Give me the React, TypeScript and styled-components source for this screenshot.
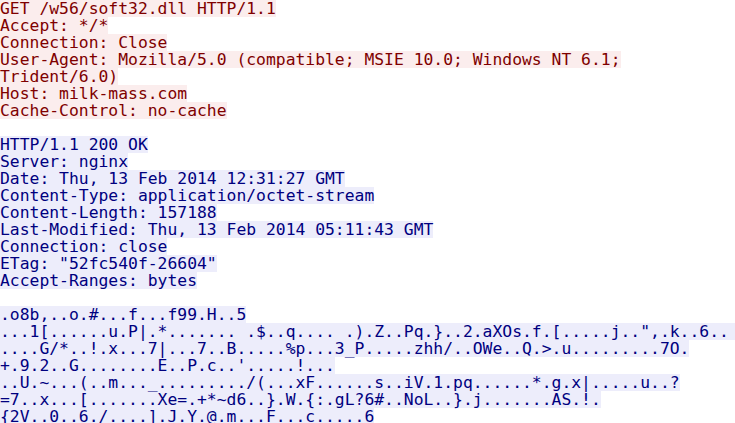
import React from "react";
import styled, { createGlobalStyle } from "styled-components";

const Global = createGlobalStyle`
  html, body {
    margin: 0;
    padding: 0;
    background: #ffffff;
    overflow: hidden;
  }
`;

const Stream = styled.div`
  width: 735px;
  height: 423px;
  overflow: hidden;
  font-family: "DejaVu Sans Mono", "Liberation Mono", monospace;
  font-size: 16.37px;
  background: #ffffff;
`;

type Side = "client" | "server";

const Line = styled.div<{ $side: Side }>`
  width: fit-content;
  height: 16px;
  padding-top: 1px;
  line-height: 16px;
  white-space: pre;
  color: ${(p) => (p.$side === "client" ? "#7f0000" : "#00007f")};
  background: ${(p) => (p.$side === "client" ? "#fbeded" : "#ededfb")};
`;

const Gap = styled.div`
  height: 17px;
`;

const request = [
  "GET /w56/soft32.dll HTTP/1.1",
  "Accept: */*",
  "Connection: Close",
  "User-Agent: Mozilla/5.0 (compatible; MSIE 10.0; Windows NT 6.1;",
  "Trident/6.0)",
  "Host: milk-mass.com",
  "Cache-Control: no-cache",
];

const response = [
  "HTTP/1.1 200 OK",
  "Server: nginx",
  "Date: Thu, 13 Feb 2014 12:31:27 GMT",
  "Content-Type: application/octet-stream",
  "Content-Length: 157188",
  "Last-Modified: Thu, 13 Feb 2014 05:11:43 GMT",
  "Connection: close",
  'ETag: "52fc540f-26604"',
  "Accept-Ranges: bytes",
];

const body = [
  ".o8b,..o.#...f...f99.H..5",
  '...1[......u.P|.*....... .$..q.... .).Z..Pq.}..2.aXOs.f.[.....j..",.k..6.. ',
  "....G/*..!.x...7|...7..B.....%p...3_P.....zhh/..OWe..Q.>.u.........7O.",
  "+.9.2..G........E..P.c..'.....!...",
  "..U.~...(..m..._........./(...xF......s..iV.1.pq......*.g.x|.....u..?",
  "=7..x...[.......Xe=.+*~d6..}.W.{:.gL?6#..NoL..}.j.......AS.!.",
  "{2V..0..6./....].J.Y.@.m...F...c.....6",
];

export default function App() {
  return (
    <>
      <Global />
      <Stream>
        {request.map((t, i) => (
          <Line key={"q" + i} $side="client">
            {t}
          </Line>
        ))}
        <Gap />
        {response.map((t, i) => (
          <Line key={"r" + i} $side="server">
            {t}
          </Line>
        ))}
        <Gap />
        {body.map((t, i) => (
          <Line key={"b" + i} $side="server">
            {t}
          </Line>
        ))}
      </Stream>
    </>
  );
}
